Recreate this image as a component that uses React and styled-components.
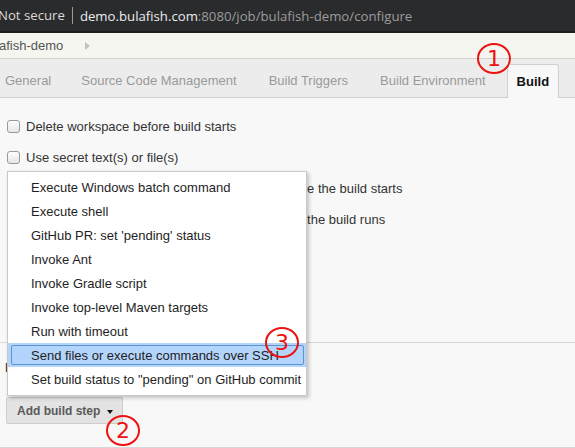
import React from "react";
import styled, { createGlobalStyle } from "styled-components";

const GlobalStyle = createGlobalStyle`
  html, body { margin: 0; padding: 0; background: #f8f8f8; }
  body { overflow: hidden; }
`;

const Page = styled.div`
  position: relative;
  width: 575px;
  height: 448px;
  overflow: hidden;
  background: #f8f8f8;
  font-family: "Liberation Sans", Arial, sans-serif;
  font-size: 13px;
`;

const AddressBar = styled.div`
  height: 31px;
  display: flex;
  align-items: center;
  background: #2a2b2d;
  border-bottom: 2px solid #1c1d1f;
  font-family: "Open Sans", "Noto Sans", sans-serif;
  font-size: 13.2px;
  white-space: nowrap;
`;

const Secure = styled.span`
  margin-left: -2px;
  color: #dadada;
  padding-right: 7px;
  border-right: 1px solid #9a9a9a;
  line-height: 17px;
`;

const Url = styled.span`
  margin-left: 7px;
  color: #ececec;
`;

const UrlPath = styled.span`
  color: #9c9c9c;
`;

const Breadcrumbs = styled.div`
  height: 25px;
  display: flex;
  align-items: center;
  gap: 22px;
  background: #f5f6f0;
  color: #555;
  font-size: 13px;
  border-bottom: 1px solid #d2d2d2;
`;

const Crumb = styled.span`
  margin-left: -1px;
`;

const CrumbArrow = styled.span`
  width: 0;
  height: 0;
  border-left: 5px solid #c2c2c2;
  border-top: 4px solid transparent;
  border-bottom: 4px solid transparent;
`;

const TabBar = styled.div`
  height: 38px;
  display: flex;
  align-items: flex-end;
  background: #ececec;
  border-bottom: 1px solid #d0d0d0;
  white-space: nowrap;
`;

const Tab = styled.div`
  height: ${(p) => (p.$active ? "34px" : "32px")};
  box-sizing: border-box;
  display: flex;
  align-items: center;
  margin-left: ${(p) => p.$gap}px;
  padding: ${(p) => (p.$active ? "0 9px" : "0")};
  color: ${(p) => (p.$active ? "#111" : "#9a9a9a")};
  font-weight: ${(p) => (p.$active ? "bold" : "normal")};
  background: ${(p) => (p.$active ? "#f8f8f8" : "transparent")};
  border: ${(p) => (p.$active ? "1px solid #cfcfcf" : "none")};
  border-bottom: none;
  border-radius: 3px 3px 0 0;
  margin-bottom: ${(p) => (p.$active ? "-1px" : "0")};
  padding-bottom: ${(p) => (p.$active ? "0" : "2px")};
`;

const Content = styled.div`
  position: relative;
  padding-top: 13px;
`;

const OptionRow = styled.div`
  height: 31px;
  display: flex;
  align-items: center;
  gap: 6px;
  padding-left: 7px;
  color: #333;
  white-space: nowrap;
`;

const Checkbox = styled.span`
  width: 11px;
  height: 11px;
  border: 1px solid #9a9a9a;
  border-radius: 3px;
  background: linear-gradient(#fdfdfd, #e6e6e6);
`;

const Divider = styled.div`
  margin-top: 14px;
  border-top: 1px solid #d8d8d8;
`;

const SectionTitle = styled.div`
  padding: 17px 0 0 5px;
  height: 38px;
  box-sizing: border-box;
  font-weight: bold;
  color: #444;
`;

const StepButton = styled.div`
  margin: 16px 0 0 6px;
  width: 117px;
  height: 27px;
  box-sizing: border-box;
  display: flex;
  align-items: center;
  justify-content: space-between;
  padding: 0 9px 0 10px;
  background: #e3e3e3;
  border: 1px solid #cdcdcd;
  border-radius: 2px;
  color: #5a5a5a;
  font-size: 12px;
  font-weight: bold;
  white-space: nowrap;
`;

const Caret = styled.span`
  width: 0;
  height: 0;
  margin-top: 3px;
  border-top: 4px solid #111;
  border-left: 3px solid transparent;
  border-right: 3px solid transparent;
`;

const BottomLine = styled.div`
  margin-top: 23px;
  border-top: 1px solid #d8d8d8;
`;

const Menu = styled.div`
  position: absolute;
  left: 7px;
  top: 73px;
  width: 298px;
  padding: 3px 0 4px;
  background: #fff;
  border: 1px solid #c9c9c9;
  box-shadow: 2px 2px 4px rgba(0, 0, 0, 0.22);
`;

const MenuItem = styled.div`
  position: relative;
  height: 24px;
  display: flex;
  align-items: center;
  padding-left: 23px;
  color: #1e1e1e;
  white-space: nowrap;
  background: ${(p) => (p.$selected ? "#b3d4fb" : "transparent")};

  &::before {
    content: "";
    display: ${(p) => (p.$selected ? "block" : "none")};
    position: absolute;
    left: 3px;
    right: 2px;
    top: 2px;
    bottom: 2px;
    border: 1px solid #5b93d3;
    border-radius: 2px;
  }
`;

const MenuLabel = styled.span`
  position: relative;
`;

const Marker = styled.span`
  position: absolute;
  left: ${(p) => p.$x}px;
  top: ${(p) => p.$y}px;
  width: 30px;
  height: 27px;
  border: 2px solid #ee1111;
  border-radius: 50%;
  display: flex;
  align-items: center;
  justify-content: center;
  color: #ee1111;
  font-family: "DejaVu Sans", sans-serif;
  font-size: 22px;
  line-height: 1;
`;

const options = [
  "Delete workspace before build starts",
  "Use secret text(s) or file(s)",
  "Send files or execute commands over SSH before the build starts",
  "Send files or execute commands over SSH after the build runs",
  "Abort the build if it's stuck",
  "Add timestamps to the Console Output",
  "With Ant",
];

const steps = [
  "Execute Windows batch command",
  "Execute shell",
  "GitHub PR: set 'pending' status",
  "Invoke Ant",
  "Invoke Gradle script",
  "Invoke top-level Maven targets",
  "Run with timeout",
  "Send files or execute commands over SSH",
  'Set build status to "pending" on GitHub commit',
];

const tabs = [
  { label: "General", gap: 5 },
  { label: "Source Code Management", gap: 30 },
  { label: "Build Triggers", gap: 32 },
  { label: "Build Environment", gap: 32 },
];

export default function App() {
  return (
    <Page>
      <GlobalStyle />
      <AddressBar>
        <Secure>Not secure</Secure>
        <Url>
          demo.bulafish.com<UrlPath>:8080/job/bulafish-demo/configure</UrlPath>
        </Url>
      </AddressBar>

      <Breadcrumbs>
        <Crumb>afish-demo</Crumb>
        <CrumbArrow />
      </Breadcrumbs>

      <TabBar>
        {tabs.map((t) => (
          <Tab key={t.label} $gap={t.gap}>
            {t.label}
          </Tab>
        ))}
        <Tab $active $gap={21}>
          Build
        </Tab>
      </TabBar>

      <Content>
        {options.map((o) => (
          <OptionRow key={o}>
            <Checkbox />
            {o}
          </OptionRow>
        ))}
        <Divider />
        <SectionTitle>Build</SectionTitle>
        <StepButton>
          Add build step
          <Caret />
        </StepButton>
        <BottomLine />

        <Menu>
          {steps.map((s, i) => (
            <MenuItem key={s} $selected={i === 7}>
              <MenuLabel>{s}</MenuLabel>
            </MenuItem>
          ))}
        </Menu>
      </Content>

      <Marker $x={477} $y={43}>1</Marker>
      <Marker $x={106} $y={415}>2</Marker>
      <Marker $x={265} $y={327}>3</Marker>
    </Page>
  );
}
